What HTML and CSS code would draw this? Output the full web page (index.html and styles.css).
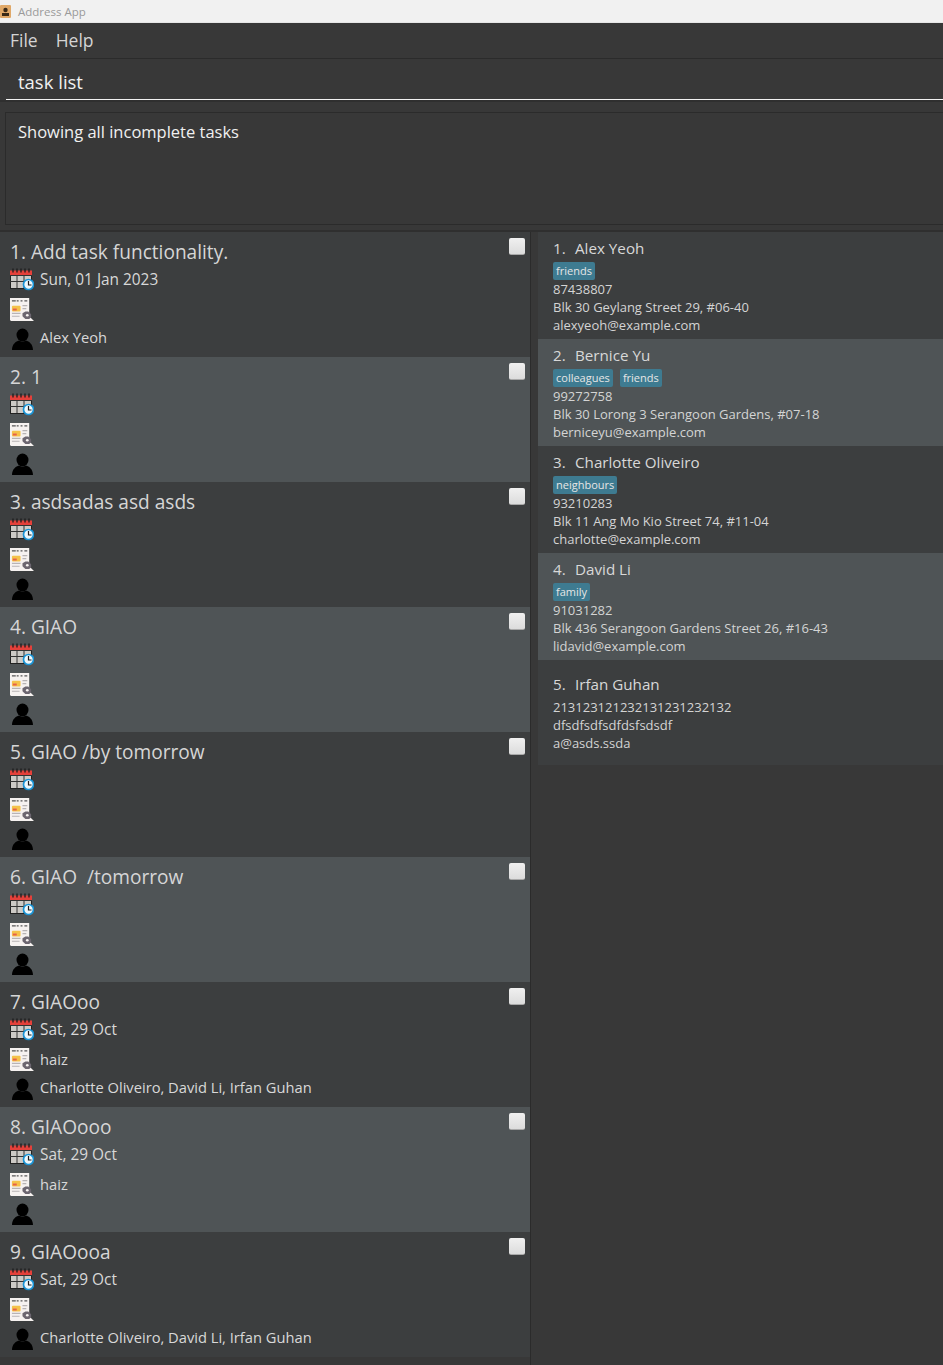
FILE: index.html
```html
<!DOCTYPE html>
<html lang="en">
<head>
<meta charset="utf-8">
<title>Address App</title>
<link rel="stylesheet" href="styles.css">
</head>
<body>
<svg class="defs" width="0" height="0" aria-hidden="true">
  <symbol id="cal" viewBox="0 0 24 24">
    <rect x="0.500" y="4" width="21" height="16.500" fill="#cdcac6" stroke="#222"/>
    <rect x="0" y="2.500" width="22" height="4.500" fill="#e5403a"/>
    <path d="M3 0.500v4M7 0.500v4M11 0.500v4M15 0.500v4M19 0.500v4" stroke="#1c1c1c" stroke-width="1.300"/>
    <path d="M7 7v13M14 7v13M0 13.500h16M0 7.500h22" stroke="#333" stroke-width="1"/>
    <circle cx="18.500" cy="16.500" r="5" fill="#eef8fc" stroke="#1a94d6" stroke-width="1.700"/>
    <path d="M18.500 13v4h3" fill="none" stroke="#1c1c1c" stroke-width="1.200"/>
  </symbol>
  <symbol id="note" viewBox="0 0 25 25">
    <path d="M0 0h20v19l5 5H1l-1-1z" fill="#f6f2f0"/>
    <path d="M2 3h4M7 3h2M11 3h2M15 3h3" stroke="#555" stroke-width="1.500"/>
    <rect x="2" y="8" width="9" height="6" rx="1" fill="#f4c24a"/>
    <rect x="3" y="11" width="4" height="2" fill="#e8604c"/>
    <path d="M13 8h5M13 11h4M2 16h9M2 19h8" stroke="#b8b4b4" stroke-width="1.200"/>
    <path d="M16 14h3l3 3v3l-2 2h-4l-3-3v-3z" fill="#6c6670"/>
    <circle cx="18" cy="18" r="1.400" fill="#f6f2f0"/>
  </symbol>
  <symbol id="person" viewBox="0 0 24 24">
    <ellipse cx="12.500" cy="9" rx="6" ry="6.500" fill="#000"/>
    <path d="M2 24c0-6 4-8.500 7-9.500 2 1.500 5 1.500 7 0 3 1 7 3.500 7 9.500z" fill="#000"/>
  </symbol>
</svg>

<header class="titlebar">
  <svg class="appicon" viewBox="0 0 11 13" width="11" height="13" aria-hidden="true">
    <rect width="11" height="13" rx="1" fill="#e0a868"/>
    <circle cx="5.500" cy="5" r="2.200" fill="#3a2a18"/>
    <rect x="2" y="8" width="7" height="3" fill="#3a2a18"/>
  </svg>
  <span>Address App</span>
</header>

<nav class="menubar">
  <span>File</span>
  <span>Help</span>
</nav>

<div class="commandbox">
  <div class="commandfield">task list</div>
</div>

<div class="resultwrap">
  <div class="resultbox">Showing all incomplete tasks</div>
</div>

<main class="split">
  <section class="tasks">
    <article class="task">
      <h2>1. Add task functionality.</h2>
      <div class="line"><svg class="ic"><use href="#cal"/></svg><span class="date">Sun, 01 Jan 2023</span></div>
      <div class="line"><svg class="ic"><use href="#note"/></svg></div>
      <div class="line"><svg class="ic"><use href="#person"/></svg><span>Alex Yeoh</span></div>
      <i class="check"></i>
    </article>
    <article class="task alt">
      <h2>2. 1</h2>
      <div class="line"><svg class="ic"><use href="#cal"/></svg></div>
      <div class="line"><svg class="ic"><use href="#note"/></svg></div>
      <div class="line"><svg class="ic"><use href="#person"/></svg></div>
      <i class="check"></i>
    </article>
    <article class="task">
      <h2>3. asdsadas asd asds</h2>
      <div class="line"><svg class="ic"><use href="#cal"/></svg></div>
      <div class="line"><svg class="ic"><use href="#note"/></svg></div>
      <div class="line"><svg class="ic"><use href="#person"/></svg></div>
      <i class="check"></i>
    </article>
    <article class="task alt">
      <h2>4. GIAO</h2>
      <div class="line"><svg class="ic"><use href="#cal"/></svg></div>
      <div class="line"><svg class="ic"><use href="#note"/></svg></div>
      <div class="line"><svg class="ic"><use href="#person"/></svg></div>
      <i class="check"></i>
    </article>
    <article class="task">
      <h2>5. GIAO /by tomorrow</h2>
      <div class="line"><svg class="ic"><use href="#cal"/></svg></div>
      <div class="line"><svg class="ic"><use href="#note"/></svg></div>
      <div class="line"><svg class="ic"><use href="#person"/></svg></div>
      <i class="check"></i>
    </article>
    <article class="task alt">
      <h2>6. GIAO &nbsp;/tomorrow</h2>
      <div class="line"><svg class="ic"><use href="#cal"/></svg></div>
      <div class="line"><svg class="ic"><use href="#note"/></svg></div>
      <div class="line"><svg class="ic"><use href="#person"/></svg></div>
      <i class="check"></i>
    </article>
    <article class="task">
      <h2>7. GIAOoo</h2>
      <div class="line"><svg class="ic"><use href="#cal"/></svg><span class="date">Sat, 29 Oct</span></div>
      <div class="line"><svg class="ic"><use href="#note"/></svg><span>haiz</span></div>
      <div class="line"><svg class="ic"><use href="#person"/></svg><span>Charlotte Oliveiro, David Li, Irfan Guhan</span></div>
      <i class="check"></i>
    </article>
    <article class="task alt">
      <h2>8. GIAOooo</h2>
      <div class="line"><svg class="ic"><use href="#cal"/></svg><span class="date">Sat, 29 Oct</span></div>
      <div class="line"><svg class="ic"><use href="#note"/></svg><span>haiz</span></div>
      <div class="line"><svg class="ic"><use href="#person"/></svg></div>
      <i class="check"></i>
    </article>
    <article class="task">
      <h2>9. GIAOooa</h2>
      <div class="line"><svg class="ic"><use href="#cal"/></svg><span class="date">Sat, 29 Oct</span></div>
      <div class="line"><svg class="ic"><use href="#note"/></svg></div>
      <div class="line"><svg class="ic"><use href="#person"/></svg><span>Charlotte Oliveiro, David Li, Irfan Guhan</span></div>
      <i class="check"></i>
    </article>
  </section>

  <section class="people">
    <article class="person">
      <h3><span class="num">1.</span>Alex Yeoh</h3>
      <div class="tags"><b>friends</b></div>
      <p>87438807</p>
      <p>Blk 30 Geylang Street 29, #06-40</p>
      <p>alexyeoh@example.com</p>
    </article>
    <article class="person alt">
      <h3><span class="num">2.</span>Bernice Yu</h3>
      <div class="tags"><b>colleagues</b><b>friends</b></div>
      <p>99272758</p>
      <p>Blk 30 Lorong 3 Serangoon Gardens, #07-18</p>
      <p>berniceyu@example.com</p>
    </article>
    <article class="person">
      <h3><span class="num">3.</span>Charlotte Oliveiro</h3>
      <div class="tags"><b>neighbours</b></div>
      <p>93210283</p>
      <p>Blk 11 Ang Mo Kio Street 74, #11-04</p>
      <p>charlotte@example.com</p>
    </article>
    <article class="person alt">
      <h3><span class="num">4.</span>David Li</h3>
      <div class="tags"><b>family</b></div>
      <p>91031282</p>
      <p>Blk 436 Serangoon Gardens Street 26, #16-43</p>
      <p>lidavid@example.com</p>
    </article>
    <article class="person">
      <h3><span class="num">5.</span>Irfan Guhan</h3>
      <div class="tags"></div>
      <p>213123121232131231232132</p>
      <p>dfsdfsdfsdfdsfsdsdf</p>
      <p>a@asds.ssda</p>
    </article>
  </section>
</main>
</body>
</html>
```

FILE: styles.css
```css
* { box-sizing: border-box; }
html, body { margin: 0; padding: 0; }
body {
  width: 943px;
  height: 1365px;
  overflow: hidden;
  background: #383838;
  font-family: "Open Sans", "Liberation Sans", sans-serif;
  color: #d8d8d8;
}
.defs { position: absolute; }

.titlebar {
  height: 23px;
  background: #f1f1f1;
  display: flex;
  align-items: center;
  gap: 7px;
  font-size: 11.500px;
  color: #9a9a9a;
  border-bottom: 1px solid #e6e6e6;
}
.appicon { display: block; }

.menubar {
  height: 36px;
  display: flex;
  gap: 18px;
  align-items: center;
  padding: 0 0 2px 10px;
  font-size: 17.500px;
  color: #d4d4d4;
  border-bottom: 1px solid #2b2b2b;
}

.commandbox {
  height: 43px;
  padding-left: 6px;
  border-bottom: 2px solid #2f2f2f;
}
.commandfield {
  height: 41px;
  padding-left: 12px;
  line-height: 45px;
  font-size: 18.500px;
  color: #f0f0f0;
  border-bottom: 1px solid #f2f2f2;
}

.resultwrap {
  padding: 10px 0 6px 5px;
  border-bottom: 2px solid #2f2f2f;
  height: 130px;
}
.resultbox {
  height: 113px;
  border: 1px solid #2b2b2b;
  border-right: 0;
  padding: 7px 12px;
  font-size: 16.500px;
  line-height: 24px;
  color: #f0f0f0;
}

.split {
  display: flex;
  height: 1133px;
}
.tasks {
  width: 531px;
  flex: none;
  border-right: 1px solid #2b2b2b;
}
.task {
  position: relative;
  height: 125px;
  background: #3c3e3f;
  padding: 5px 0 0 10px;
}
.task.alt { background: #4f5456; }
.task h2 {
  margin: 0;
  font-size: 19.100px;
  font-weight: 400;
  line-height: 30px;
  color: #d6d6d6;
  white-space: nowrap;
}
.line {
  display: flex;
  align-items: center;
  gap: 6px;
  font-size: 14.700px;
  color: #d8d8d8;
}
.line:nth-of-type(1) { height: 25px; }
.line:nth-of-type(2) { height: 33px; }
.line:nth-of-type(3) { height: 23px; }
.line:nth-of-type(n+2) .ic { margin-top: 2px; }
.date { font-size: 15.400px; }
.ic { width: 24px; height: 24px; flex: none; display: block; }
.check {
  position: absolute;
  right: 5px;
  top: 6px;
  width: 16px;
  height: 17px;
  border-radius: 2px;
  background: linear-gradient(#f0f0f0, #dcdcdc);
  border-bottom: 1px solid #a9a9a9;
}

.people {
  margin-left: 7px;
  flex: 1;
  align-self: flex-start;
}
.person {
  height: 107px;
  background: #3c3e3f;
  padding: 5px 0 0 15px;
}
.person.alt { background: #4f5456; }
.person:last-child { height: 105px; padding-top: 13px; }
.person h3 {
  margin: 0;
  height: 25px;
  font-size: 15.200px;
  font-weight: 400;
  line-height: 23px;
  color: #d8d8d8;
  white-space: nowrap;
}
.num { display: inline-block; width: 22px; }
.tags {
  display: flex;
  gap: 7px;
  height: 18px;
}
.tags:empty { height: 0; }
.tags b {
  height: 18px;
  padding: 0 3px;
  background: #3e7b91;
  border-radius: 2px;
  font-size: 11px;
  font-weight: 400;
  line-height: 18px;
  color: #e6e6e6;
}
.person p {
  margin: 0;
  height: 18px;
  font-size: 13px;
  line-height: 18px;
  color: #d4d4d4;
  white-space: nowrap;
}
```
